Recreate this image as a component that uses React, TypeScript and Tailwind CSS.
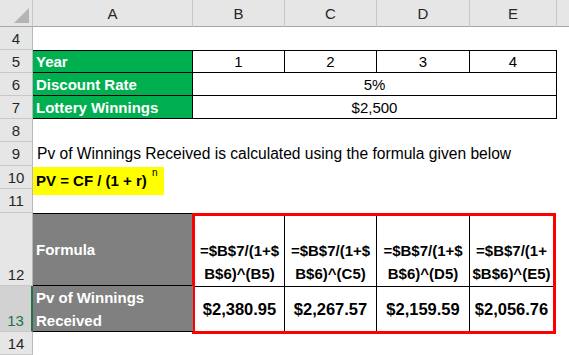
import React from 'react';

const COLS = ['A', 'B', 'C', 'D', 'E'];

const FORMULAS: { top: string; bottom: string; value: string }[] = [
  { top: '=$B$7/(1+$', bottom: 'B$6)^(B5)', value: '$2,380.95' },
  { top: '=$B$7/(1+$', bottom: 'B$6)^(C5)', value: '$2,267.57' },
  { top: '=$B$7/(1+$', bottom: 'B$6)^(D5)', value: '$2,159.59' },
  { top: '=$B$7/(1+', bottom: '$B$6)^(E5)', value: '$2,056.76' },
];

function RowNum({ n, tall, selected }: { n: number; tall?: boolean; selected?: boolean }) {
  return (
    <div
      className={
        'flex justify-center border-b border-[#c8c8c8] ' +
        (tall ? 'items-end pb-[3px] ' : 'items-center ') +
        (selected
          ? 'border-r-2 border-r-[#217346] bg-[#d2d2d2] text-[#217346]'
          : 'border-r border-r-[#b8b8b8] bg-[#e6e6e6] text-[#262626]')
      }
    >
      {n}
    </div>
  );
}

function Blank({ span }: { span?: boolean }) {
  return <div className={span ? 'col-span-6' : ''} />;
}

export default function App() {
  return (
    <div className="grid h-[355px] w-[569px] grid-cols-[33px_160px_92px_92px_93px_87px_12px] grid-rows-[27px_23px_23px_23px_23px_23px_24px_23px_24px_73px_46px_23px] overflow-hidden bg-white font-['Liberation_Sans',Arial,sans-serif] text-[15px] leading-none text-black">
      {/* column headers */}
      <div className="flex items-end justify-end border-r border-b border-r-[#c8c8c8] border-b-[#a6a6a6] bg-[#e6e6e6] pr-[3px] pb-[3px]">
        <svg width="15" height="15" viewBox="0 0 15 15">
          <polygon points="0,15 15,15 15,0" fill="#b4b4b4" />
        </svg>
      </div>
      {COLS.map((c) => (
        <div
          key={c}
          className="flex items-center justify-center border-r border-b border-r-[#c8c8c8] border-b-[#a6a6a6] bg-[#e6e6e6] text-[#262626]"
        >
          {c}
        </div>
      ))}
      <div className="border-b border-[#a6a6a6] bg-[#e6e6e6]" />

      {/* row 4 */}
      <RowNum n={4} />
      <Blank span />

      {/* row 5 */}
      <RowNum n={5} />
      <div className="flex items-center border-t border-r border-b border-black bg-[#00b050] pl-[3px] font-bold text-white">
        Year
      </div>
      {[1, 2, 3, 4].map((y) => (
        <div key={y} className="flex items-center justify-center border-t border-r border-b border-black">
          {y}
        </div>
      ))}
      <div />

      {/* row 6 */}
      <RowNum n={6} />
      <div className="flex items-center border-r border-b border-black bg-[#00b050] pl-[3px] font-bold text-white">
        Discount Rate
      </div>
      <div className="col-span-4 flex items-center justify-center border-r border-b border-black">5%</div>
      <div />

      {/* row 7 */}
      <RowNum n={7} />
      <div className="flex items-center border-r border-b border-black bg-[#00b050] pl-[3px] font-bold text-white">
        Lottery Winnings
      </div>
      <div className="col-span-4 flex items-center justify-center border-r border-b border-black">$2,500</div>
      <div />

      {/* row 8 */}
      <RowNum n={8} />
      <Blank span />

      {/* row 9 */}
      <RowNum n={9} />
      <div className="col-span-6 flex items-center whitespace-nowrap pl-[4px] text-[15.6px]">
        Pv of Winnings Received is calculated using the formula given below
      </div>

      {/* row 10 */}
      <RowNum n={10} />
      <div className="col-span-6 flex items-start pt-[1px]">
        <span className="flex h-[28px] w-[131px] items-center bg-[#ffff00] pl-[3px] pb-[2px] font-bold whitespace-nowrap">
          PV = CF / (1 + r)
          <sup className="ml-[5px] -mt-[4px] text-[10px] font-normal">n</sup>
        </span>
      </div>

      {/* row 11 */}
      <RowNum n={11} />
      <Blank span />

      {/* rows 12-13 */}
      <div className="col-start-1 row-start-10 grid">
        <RowNum n={12} tall />
      </div>
      <div className="col-start-2 row-start-10 flex items-center border-t border-b border-black bg-[#808080] pl-[3px] font-bold text-white">
        Formula
      </div>
      <div className="col-start-3 col-span-4 row-start-10 row-span-2 -mb-[2px] -ml-px mr-px grid grid-cols-[90px_92px_93px_1fr] grid-rows-[71px_1fr] border-[3px] border-[#ff0000] font-bold">
        {FORMULAS.map((f, i) => (
          <div
            key={'f' + i}
            className={
              'flex flex-col items-center justify-end border-b border-black pb-[1px] leading-[23px] ' +
              (i < 3 ? 'border-r' : '')
            }
          >
            <span className="whitespace-nowrap">{f.top}</span>
            <span className="whitespace-nowrap">{f.bottom}</span>
          </div>
        ))}
        {FORMULAS.map((f, i) => (
          <div
            key={'v' + i}
            className={
              'flex items-center justify-center border-black text-[16.5px] ' + (i < 3 ? 'border-r' : '')
            }
          >
            {f.value}
          </div>
        ))}
      </div>
      <div className="col-start-7 row-start-10" />

      <div className="col-start-1 row-start-11 grid">
        <RowNum n={13} tall selected />
      </div>
      <div className="col-start-2 row-start-11 flex flex-col justify-center border-b border-black bg-[#808080] pl-[3px] font-bold leading-[23px] text-white">
        <span>Pv of Winnings</span>
        <span>Received</span>
      </div>

      {/* row 14 */}
      <div className="col-start-1 row-start-12 grid">
        <RowNum n={14} />
      </div>
    </div>
  );
}
